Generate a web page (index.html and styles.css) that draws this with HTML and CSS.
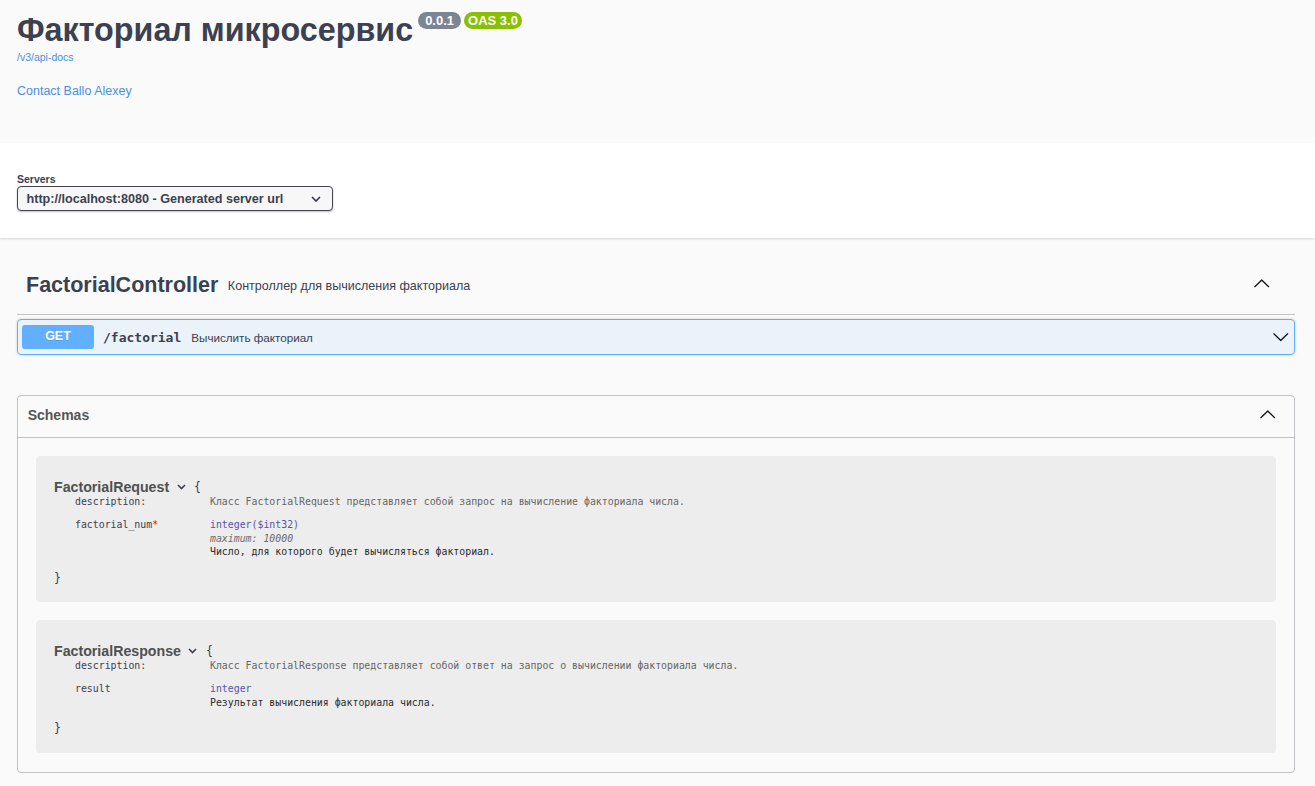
FILE: index.html
```html
<!DOCTYPE html>
<html lang="ru">
<head>
<meta charset="utf-8">
<title>Swagger UI</title>
<link rel="stylesheet" href="styles.css">
</head>
<body>
<section class="info">
  <div class="title-row">
    <h1 class="title">Факториал микросервис</h1>
    <span class="badge badge-version">0.0.1</span>
    <span class="badge badge-oas">OAS 3.0</span>
  </div>
  <a class="base-url" href="#">/v3/api-docs</a>
  <div class="contact"><a href="#">Contact Ballo Alexey</a></div>
</section>

<section class="schemes">
  <span class="servers-label">Servers</span>
  <div class="select">
    <span>http://localhost:8080 - Generated server url</span>
    <svg class="select-arrow" width="10" height="6" viewBox="0 0 10 6"><polyline points="1,1 5,5 9,1" fill="none" stroke="#2b2f3a" stroke-width="1.5"/></svg>
  </div>
</section>

<main class="content">
  <div class="tag">
    <h3 class="tag-title">FactorialController</h3>
    <span class="tag-desc">Контроллер для вычисления факториала</span>
    <svg class="arrow arrow-tag" width="17.5" height="17.5" viewBox="0 0 20 20"><g transform="translate(0,20) scale(1,-1)"><path d="M17.418 6.109c.272-.268.709-.268.979 0s.271.701 0 .969l-7.908 7.83a.697.697 0 0 1-.979 0l-7.908-7.83c-.27-.268-.27-.701 0-.969.271-.268.709-.268.979 0L10 13.25l7.418-7.141z"/></g></svg>
  </div>

  <div class="opblock">
    <span class="method">GET</span>
    <span class="path">/factorial</span>
    <span class="summary">Вычислить факториал</span>
    <svg class="arrow arrow-op" width="17.5" height="17.5" viewBox="0 0 20 20"><path d="M17.418 6.109c.272-.268.709-.268.979 0s.271.701 0 .969l-7.908 7.83a.697.697 0 0 1-.979 0l-7.908-7.83c-.27-.268-.27-.701 0-.969.271-.268.709-.268.979 0L10 13.25l7.418-7.141z"/></svg>
  </div>

  <section class="models">
    <h4 class="models-head">
      <span>Schemas</span>
      <svg class="arrow arrow-models" width="17.5" height="17.5" viewBox="0 0 20 20"><g transform="translate(0,20) scale(1,-1)"><path d="M17.418 6.109c.272-.268.709-.268.979 0s.271.701 0 .969l-7.908 7.83a.697.697 0 0 1-.979 0l-7.908-7.83c-.27-.268-.27-.701 0-.969.271-.268.709-.268.979 0L10 13.25l7.418-7.141z"/></g></svg>
    </h4>
    <div class="models-body">
      <div class="model-box">
        <div class="model-title">
          <span class="model-name">FactorialRequest</span>
          <svg class="model-toggle" width="9" height="6" viewBox="0 0 9 6"><polyline points="1,1 4.5,4.5 8,1" fill="none" stroke="#3b4151" stroke-width="1.6"/></svg>
          <span class="brace">{</span>
        </div>
        <div class="props">
          <span class="prop-name">description:</span>
          <span class="prop-desc">Класс FactorialRequest представляет собой запрос на вычисление факториала числа.</span>
          <span class="prop-name">factorial_num<span class="star">*</span></span>
          <div class="prop-val">
            <div><span class="prop-type">integer</span><span class="prop-format">($int32)</span></div>
            <div class="prop-extra">maximum: 10000</div>
            <div class="prop-text">Число, для которого будет вычисляться факториал.</div>
          </div>
        </div>
        <div class="brace-close">}</div>
      </div>

      <div class="model-box">
        <div class="model-title">
          <span class="model-name">FactorialResponse</span>
          <svg class="model-toggle" width="9" height="6" viewBox="0 0 9 6"><polyline points="1,1 4.5,4.5 8,1" fill="none" stroke="#3b4151" stroke-width="1.6"/></svg>
          <span class="brace">{</span>
        </div>
        <div class="props">
          <span class="prop-name">description:</span>
          <span class="prop-desc">Класс FactorialResponse представляет собой ответ на запрос о вычислении факториала числа.</span>
          <span class="prop-name">result</span>
          <div class="prop-val">
            <div><span class="prop-type">integer</span></div>
            <div class="prop-text">Результат вычисления факториала числа.</div>
          </div>
        </div>
        <div class="brace-close">}</div>
      </div>
    </div>
  </section>
</main>
</body>
</html>
```

FILE: styles.css
```css
* { box-sizing: border-box; }
html, body { margin: 0; padding: 0; }
body {
  background: #fafafa;
  font-family: "Liberation Sans", Arial, sans-serif;
  color: #3b4151;
}

/* info */
.info { padding: 12px 20px 45px 17px; }
.title-row { display: flex; align-items: flex-start; }
.title {
  margin: 0;
  font-size: 32.3px;
  line-height: 36px;
  font-weight: 700;
  color: #3b4151;
}
.badge {
  display: inline-block;
  height: 17px;
  line-height: 17px;
  border-radius: 57px;
  font-size: 13px;
  font-weight: 700;
  color: #fff;
}
.badge-version { background: #7d8492; padding: 0 7px; margin-left: 5px; }
.badge-oas { background: #89bf04; padding: 0 4px; margin-left: 3px; }
.base-url {
  display: block;
  margin-top: 3px;
  font-size: 10.5px;
  line-height: 12px;
  color: #4990e2;
  text-decoration: none;
}
.contact { margin-top: 21px; font-size: 12.5px; line-height: 14px; }
.contact a { color: #4990e2; text-decoration: none; }

/* servers */
.schemes {
  background: #fff;
  box-shadow: 0 1px 2px 0 rgba(0, 0, 0, .15);
  padding: 29px 20px 27px 17px;
}
.servers-label {
  display: block;
  font-size: 10.5px;
  font-weight: 700;
  line-height: 14px;
  color: #3b4151;
}
.select {
  display: flex;
  align-items: center;
  justify-content: space-between;
  width: 316px;
  height: 25px;
  padding: 0 11.5px 0 8.5px;
  border: 1.5px solid #41444e;
  border-radius: 4px;
  background: #f7f7f7;
  box-shadow: 0 1px 2px 0 rgba(0, 0, 0, .25);
  font-size: 12.6px;
  font-weight: 700;
  color: #3b4151;
}

/* content */
.content { padding: 17px 20px 0 17px; }
.tag {
  display: flex;
  align-items: center;
  height: 60px;
  padding: 2px 24.5px 0 9px;
  border-bottom: 1px solid rgba(59, 65, 81, .3);
}
.tag-title {
  margin: 0;
  font-size: 21.5px;
  font-weight: 700;
  line-height: 25px;
  color: #3b4151;
}
.tag-desc { margin-left: 9.5px; font-size: 12.55px; color: #3b4151; }
.arrow { fill: #111; flex: none; }
.arrow-tag { margin-left: auto; margin-top: -4px; }

.opblock {
  display: flex;
  align-items: center;
  margin-top: 4px;
  height: 36px;
  padding: 0 4px;
  border: 1px solid #61affe;
  border-radius: 4px;
  background: rgba(97, 175, 254, .1);
  box-shadow: 0 0 3px rgba(0, 0, 0, .19);
}
.method {
  width: 72px;
  height: 24px;
  line-height: 23px;
  text-align: center;
  background: #61affe;
  color: #fff;
  font-weight: 700;
  font-size: 12.5px;
  border-radius: 3px;
  text-shadow: 0 1px 0 rgba(0, 0, 0, .1);
}
.path {
  margin-left: 9px;
  font-family: "DejaVu Sans Mono", monospace;
  font-weight: 700;
  font-size: 13px;
  color: #3b4151;
}
.summary { margin-left: 10px; font-size: 11.65px; color: #3b4151; }
.arrow-op { margin-left: auto; margin-right: 1px; }

/* models */
.models {
  margin-top: 40px;
  border: 1px solid rgba(59, 65, 81, .3);
  border-radius: 4px;
}
.models-head {
  display: flex;
  align-items: center;
  justify-content: space-between;
  height: 42px;
  margin: 0;
  padding: 7px 17.8px 11px 9.7px;
  border-bottom: 1px solid rgba(59, 65, 81, .3);
  font-size: 14px;
  font-weight: 700;
  color: #555;
}
.models-body { padding: 18px 18px 1px; }
.model-box {
  margin-bottom: 18px;
  padding: 23px 18px 17px;
  background: rgba(0, 0, 0, .05);
  border-radius: 4px;
}
.model-title { display: flex; align-items: center; height: 16px; }
.model-name {
  font-size: 14.2px;
  font-weight: 700;
  line-height: 16px;
  color: #505050;
}
.model-toggle { margin-left: 7.5px; }
.brace {
  margin-left: 8.5px;
  font-family: "DejaVu Sans Mono", monospace;
  font-size: 11.5px;
  color: #3b4151;
}
.props {
  display: grid;
  grid-template-columns: 135px auto;
  row-gap: 10px;
  margin-left: 21px;
  font-family: "DejaVu Sans Mono", monospace;
  font-size: 9.87px;
  line-height: 13.3px;
  color: #3b4151;
}
.prop-desc { color: #666; }
.star { color: #f00; }
.prop-type, .prop-format { color: #55a; }
.prop-extra { font-style: italic; color: #6b6b6b; }
.prop-text { color: #2b2b2b; }
.brace-close {
  margin-top: 13.5px;
  font-family: "DejaVu Sans Mono", monospace;
  font-size: 11.5px;
  line-height: 13.3px;
  color: #3b4151;
}
```
